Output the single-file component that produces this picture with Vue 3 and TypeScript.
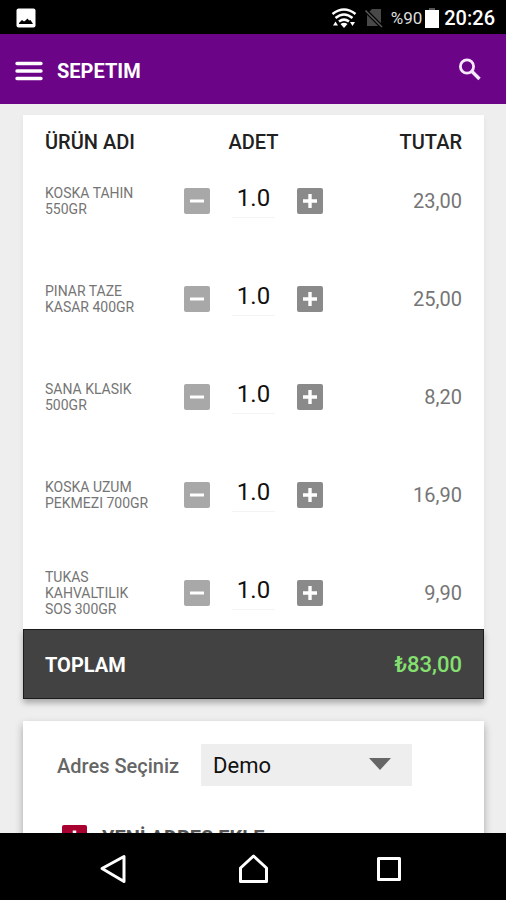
<script setup lang="ts">
import { computed, ref } from 'vue'

interface CartItem {
  id: number
  name: string
  quantity: string
  price: number
}

const items = ref<CartItem[]>([
  { id: 1, name: 'KOSKA TAHIN 550GR', quantity: '1.0', price: 23 },
  { id: 2, name: 'PINAR TAZE KASAR 400GR', quantity: '1.0', price: 25 },
  { id: 3, name: 'SANA KLASIK 500GR', quantity: '1.0', price: 8.2 },
  { id: 4, name: 'KOSKA UZUM PEKMEZI 700GR', quantity: '1.0', price: 16.9 },
  { id: 5, name: 'TUKAS KAHVALTILIK SOS 300GR', quantity: '1.0', price: 9.9 },
])

const address = ref('Demo')

function amount(item: CartItem): number {
  return (parseFloat(item.quantity) || 0) * item.price
}

function money(value: number): string {
  return value.toFixed(2).replace('.', ',')
}

function step(item: CartItem, delta: number): void {
  const next = Math.max(0, (parseFloat(item.quantity) || 0) + delta)
  item.quantity = next.toFixed(1)
}

const total = computed(() => items.value.reduce((sum, item) => sum + amount(item), 0))
</script>

<template>
  <div class="screen">
    <div class="status">
      <svg class="picture" width="20" height="20" viewBox="0 0 20 20" aria-hidden="true">
        <rect x="0.5" y="0.5" width="19" height="19" rx="2" fill="#fff" />
        <path d="M3 16V15L6 12 8 13.500 9.500 12.500 11.500 10.500 13 12.500 14.500 12 17 16z" fill="#000" />
      </svg>
      <svg class="wifi" width="26" height="22" viewBox="0 0 26 22" aria-hidden="true">
        <g fill="none" stroke="#fff" stroke-width="2.6">
          <path d="M1.5 7Q13-2 24.5 7" />
          <path d="M4.5 11Q13 4 21.5 11" />
          <path d="M8 14.600Q13 10.500 18 14.600" />
        </g>
        <path d="M9.500 17Q13 14.500 16.500 17L13 21zM2 18.500 4.500 14.500 7 18.500zM19 15h5l-2.500 4z" fill="#fff" />
      </svg>
      <svg class="sim" width="18" height="20" viewBox="0 0 18 20" aria-hidden="true">
        <path d="M7 1h9v17H2V6z" fill="#484848" />
        <path d="M0 2 17 19" stroke="#000" stroke-width="4" />
        <path d="M0.500 2.500 17 19" stroke="#555" stroke-width="1.600" />
      </svg>
      <span class="charge">%90</span>
      <svg class="battery" width="14" height="21" viewBox="0 0 14 21" aria-hidden="true">
        <path d="M4 0h6v3H4z" fill="#555" />
        <path d="M0 2h14v18H0z" fill="#fff" />
      </svg>
      <span class="clock">20:26</span>
    </div>

    <header class="appbar">
      <button class="icon-button" type="button" aria-label="Menü">
        <svg width="28" height="20" viewBox="0 0 28 20">
          <path d="M2 2.500h24M2 10h24M2 17.500h24" stroke="#fff" stroke-width="3.400" stroke-linecap="round" />
        </svg>
      </button>
      <h1>SEPETIM</h1>
      <button class="icon-button search" type="button" aria-label="Ara">
        <svg width="24" height="24" viewBox="0 0 24 24" fill="none" stroke="#f6e9fb">
          <circle cx="9" cy="9.500" r="6.600" stroke-width="2.800" />
          <path d="M13.500 14 21.500 22" stroke-width="3.400" />
        </svg>
      </button>
    </header>

    <main class="content">
      <section class="card">
        <table class="cart">
          <thead>
            <tr>
              <th class="name" scope="col">ÜRÜN ADI</th>
              <th class="quantity" scope="col">ADET</th>
              <th class="amount" scope="col">TUTAR</th>
            </tr>
          </thead>
          <tbody>
            <tr v-for="item in items" :key="item.id">
              <td class="name">{{ item.name }}</td>
              <td class="quantity">
                <div class="stepper">
                  <button class="step minus" type="button" :aria-label="item.name + ' azalt'" @click="step(item, -1)">
                    <svg width="26" height="26" viewBox="0 0 26 26"><path d="M6 13h14" stroke="#fff" stroke-width="3" /></svg>
                  </button>
                  <input v-model="item.quantity" type="text" inputmode="decimal" :aria-label="item.name + ' adet'" />
                  <button class="step plus" type="button" :aria-label="item.name + ' artır'" @click="step(item, 1)">
                    <svg width="26" height="26" viewBox="0 0 26 26"><path d="M6 13h14M13 6v14" stroke="#fff" stroke-width="3.400" /></svg>
                  </button>
                </div>
              </td>
              <td class="amount">{{ money(amount(item)) }}</td>
            </tr>
          </tbody>
        </table>
        <div class="total">
          <span class="total-label">TOPLAM</span>
          <output class="total-value">₺{{ money(total) }}</output>
        </div>
      </section>

      <section class="card address">
        <div class="field">
          <label for="address">Adres Seçiniz</label>
          <div class="select">
            <select id="address" v-model="address">
              <option>Demo</option>
            </select>
            <svg class="caret" width="22" height="12" viewBox="0 0 22 12" aria-hidden="true">
              <path d="M0 0h22L11 12z" fill="#666" />
            </svg>
          </div>
        </div>
        <button class="add" type="button">
          <svg width="25" height="25" viewBox="0 0 25 25" aria-hidden="true">
            <rect width="25" height="25" rx="2" fill="#a8002f" />
            <path d="M5.500 12.500h14M12.500 5.500v14" stroke="#fff" stroke-width="3.500" />
          </svg>
          <span>YENİ ADRES EKLE</span>
        </button>
      </section>
    </main>

    <nav class="system">
      <button type="button" aria-label="Geri">
        <svg width="48" height="36" viewBox="0 0 48 36"><path d="M11 17.500 33 5.500v25z" /></svg>
      </button>
      <button type="button" aria-label="Ana ekran">
        <svg width="48" height="36" viewBox="0 0 48 36"><path d="M11.500 17 24.500 5 37.500 17V30.500h-26z" /></svg>
      </button>
      <button type="button" aria-label="Son uygulamalar">
        <svg width="48" height="36" viewBox="0 0 48 36"><path d="M11.500 7.500h21v21h-21z" /></svg>
      </button>
    </nav>
  </div>
</template>

<style>
body {
  background: #eee;
}
</style>

<style scoped>
.screen {
  display: flex;
  flex-direction: column;
  height: 100vh;
  overflow: hidden;
  background: #eee;
  color: #212121;
  font-family: Roboto, "Liberation Sans", sans-serif;
  font-size: 20px;
  line-height: 24px;
}

button {
  display: flex;
  align-items: center;
  padding: 0;
  border: 0;
  background: none;
  font: inherit;
  cursor: pointer;
}

svg {
  display: block;
}

.status {
  display: flex;
  flex: none;
  align-items: center;
  box-sizing: border-box;
  height: 34px;
  padding: 2px 11px 0 16px;
  background: #000;
  color: #fff;
}

.wifi {
  margin-left: auto;
}

.sim {
  margin-left: 8px;
}

.charge {
  margin-left: 8px;
  color: #ddd;
  font-size: 17px;
}

.battery {
  margin: 0 5px 0 3px;
}

.clock {
  font-weight: 500;
}

.appbar {
  display: flex;
  flex: none;
  align-items: center;
  height: 70px;
  padding: 0 24px 0 15px;
  background: #6b0487;
  color: #fff;
}

.appbar h1 {
  margin: 4px 0 0 14px;
  font-size: 20px;
  font-weight: 700;
}

.icon-button {
  margin-top: 3px;
}

.search {
  margin: 0 0 0 auto;
}

.content {
  flex: 1;
  min-height: 0;
  overflow: hidden;
  padding: 11px 22px 0 23px;
}

.card {
  background: #fff;
  box-shadow: 0 3px 6px rgba(0, 0, 0, 0.06);
}

.cart {
  width: 100%;
  table-layout: fixed;
  border-collapse: collapse;
}

th,
td {
  box-sizing: border-box;
}

th {
  height: 61px;
  padding: 0 0 8px;
  font-weight: 500;
}

td {
  height: 98px;
  padding: 0 0 48px;
  color: #757575;
}

tr:last-child > td {
  height: 61px;
  padding-bottom: 11px;
}

.cart .name {
  width: 30%;
  padding-left: 22px;
  padding-right: 6px;
  text-align: left;
}

td.name {
  font-size: 14px;
  line-height: 16px;
}

.cart .quantity {
  width: 40%;
  text-align: center;
}

.cart .amount {
  width: 30%;
  padding-right: 22px;
  text-align: right;
}

.cart th.name,
.cart .amount {
  white-space: nowrap;
}

.stepper {
  display: flex;
  align-items: center;
  justify-content: center;
  gap: 22px;
}

.step {
  flex: none;
  border-radius: 2px;
}

.minus {
  background: #a8a8a8;
}

.plus {
  background: #8a8a8a;
}

.stepper input {
  width: 43px;
  height: 34px;
  box-sizing: border-box;
  padding: 0 0 5px;
  border: 0;
  border-bottom: 1px solid #f4f4f4;
  border-radius: 0;
  background: none;
  color: #111;
  font: 24px/28px Roboto, "Liberation Sans", sans-serif;
  text-align: center;
}

.total {
  display: flex;
  align-items: center;
  justify-content: space-between;
  height: 70px;
  box-sizing: border-box;
  padding: 2px 21px 0;
  border: 1px solid #1c1c1c;
  background: #424242;
  box-shadow: 0 4px 6px rgba(0, 0, 0, 0.25);
}

.total-label {
  color: #fff;
  font-weight: 700;
}

.total-value {
  color: #84e070;
  font-size: 22px;
  font-weight: 500;
}

.address {
  margin-top: 22px;
  padding: 23px 34px;
  box-shadow: 0 4px 8px rgba(0, 0, 0, 0.3);
}

.field {
  display: flex;
  align-items: center;
  gap: 22px;
}

.field label {
  flex: none;
  padding-top: 2px;
  color: #666;
  font-weight: 500;
}

.select {
  position: relative;
  flex: 0 1 211px;
}

.select select {
  display: block;
  width: 100%;
  height: 42px;
  padding: 2px 44px 0 12px;
  border: 0;
  border-radius: 0;
  appearance: none;
  background: #eee;
  color: #111;
  font: 22px/26px Roboto, "Liberation Sans", sans-serif;
}

.caret {
  position: absolute;
  top: 14px;
  right: 21px;
  pointer-events: none;
}

.add {
  gap: 15px;
  margin: 39px 0 0 5px;
  color: #555;
  font-weight: 700;
}

.system {
  display: flex;
  flex: none;
  align-items: center;
  justify-content: center;
  gap: 90px;
  height: 67px;
  background: #000;
}

.system svg {
  fill: none;
  stroke: #fff;
  stroke-width: 3;
  stroke-linejoin: round;
}

.system button {
  padding-top: 4px;
}
</style>
